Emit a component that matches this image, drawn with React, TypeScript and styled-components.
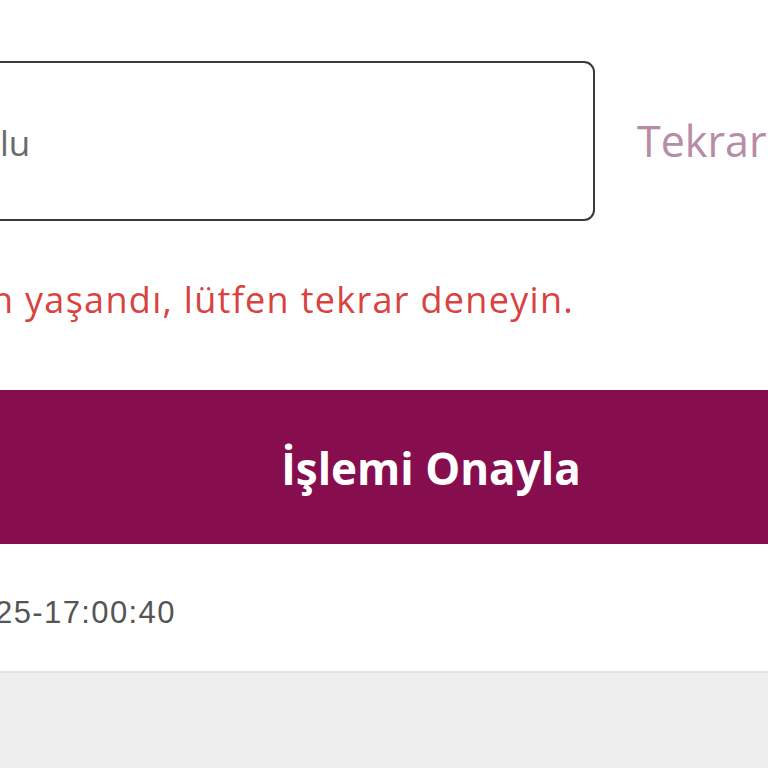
import React from "react";
import styled, { createGlobalStyle } from "styled-components";

const Global = createGlobalStyle`
  html, body { margin: 0; padding: 0; background: #ffffff; }
  body { overflow: hidden; }
  #root { width: 768px; height: 768px; }
`;

const Page = styled.div`
  width: 768px;
  height: 768px;
  overflow: hidden;
  display: flex;
  flex-direction: column;
  background: #ffffff;
  font-family: "Open Sans", "Noto Sans", sans-serif;
`;

const Panel = styled.section`
  display: flex;
  flex-direction: column;
  padding-top: 61px;
  background: #ffffff;
`;

const FieldRow = styled.div`
  display: flex;
  align-items: center;
  gap: 42px;
  margin-left: -20px;
`;

const Field = styled.div`
  box-sizing: border-box;
  flex: 0 0 615px;
  height: 160px;
  border: 2px solid #3a3a3a;
  border-radius: 11px;
  padding: 2px 0 0 18px;
  display: flex;
  align-items: center;
  font-size: 35px;
  color: #6a6a6a;
  white-space: nowrap;
  overflow: hidden;
`;

const ResendLink = styled.span`
  font-size: 43px;
  color: #b68ca6;
  white-space: nowrap;
  margin-top: -1px;
`;

const ErrorText = styled.p`
  margin: 57px 0 0 -9px;
  font-size: 36px;
  line-height: 44px;
  letter-spacing: 1.3px;
  color: #d8423f;
  white-space: nowrap;
`;

const ConfirmButton = styled.button`
  box-sizing: border-box;
  margin-top: 68px;
  width: 100%;
  height: 154px;
  border: none;
  padding: 2px 0 0 94px;
  background: #870e4e;
  color: #ffffff;
  font-family: "Open Sans", "Noto Sans", sans-serif;
  font-weight: 700;
  font-size: 44px;
  text-align: center;
`;

const Stamp = styled.div`
  margin: 50px 0 0 -5px;
  font-family: "Liberation Sans", Arial, sans-serif;
  font-size: 31px;
  line-height: 38px;
  letter-spacing: 1.4px;
  color: #555555;
  white-space: nowrap;
  height: 77px;
`;

const Footer = styled.footer`
  flex: 1;
  background: #eeeeee;
  border-top: 2px solid #e2e2e2;
`;

export default function App() {
  return (
    <>
      <Global />
      <Page>
        <Panel>
          <FieldRow>
            <Field>lu</Field>
            <ResendLink>Tekrar Gönder</ResendLink>
          </FieldRow>
          <ErrorText>n yaşandı, lütfen tekrar deneyin.</ErrorText>
          <ConfirmButton type="button">İşlemi Onayla</ConfirmButton>
          <Stamp>25-17:00:40</Stamp>
        </Panel>
        <Footer />
      </Page>
    </>
  );
}
